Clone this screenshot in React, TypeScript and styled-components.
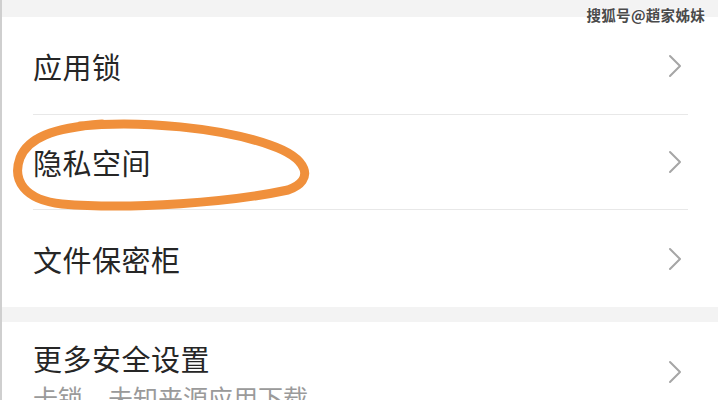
import React from 'react';
import styled, { createGlobalStyle } from 'styled-components';

const GlobalStyle = createGlobalStyle`
  html, body {
    margin: 0;
    padding: 0;
    background: #f3f3f3;
    overflow: hidden;
  }
  body {
    font-family: "Noto Sans CJK SC", "Noto Sans", sans-serif;
  }
`

const Screen = styled.div`
  position: relative;
  width: 718px;
  height: 400px;
  overflow: hidden;
  background: #f3f3f3;
  border-left: 2px solid #cfcfcf;
  box-sizing: border-box;
  padding-top: 17px;
  display: flex;
  flex-direction: column;
  gap: 15px;
`

const Card = styled.div`
  background: #ffffff;
  display: flex;
  flex-direction: column;
`

const Row = styled.div<{ height: number, divider?: boolean }>`
  height: ${props => props.height}px;
  flex-shrink: 0;
  margin: 0 30px 0 31px;
  display: flex;
  align-items: center;
  justify-content: space-between;
  border-bottom: ${props => props.divider ? '1px solid #e8e8e8' : 'none'};
  box-sizing: border-box;
`

const TextBlock = styled.div`
  align-self: flex-start;
  padding-top: 19px;
  display: flex;
  flex-direction: column;
`

const Title = styled.div`
  font-size: 29px;
  line-height: 34px;
  color: #262626;
  letter-spacing: 0.5px;
`

const Subtitle = styled.div`
  font-size: 25px;
  line-height: 30px;
  color: #9a9a9a;
  margin-top: 7px;
  white-space: nowrap;
`

const Chevron = styled.svg`
  width: 14px;
  height: 24px;
  margin-right: 6px;
  flex-shrink: 0;
`

const Watermark = styled.div`
  position: absolute;
  top: 4px;
  right: 13px;
  font-size: 14.5px;
  font-weight: 700;
  color: #4a4a4a;
  letter-spacing: 0.3px;
  text-shadow: 0 0 2px #fff, 0 0 2px #fff;
`

const Marker = styled.svg`
  position: absolute;
  left: 0;
  top: 0;
  pointer-events: none;
`

function Arrow() {
  return (
    <Chevron viewBox="0 0 14 24">
      <path d="M2 2 L12 12 L2 22" fill="none" stroke="#a6a6a6" strokeWidth="2" strokeLinecap="round" strokeLinejoin="round" />
    </Chevron>
  )
}

export default function App() {
  return (
    <>
      <GlobalStyle />
      <Screen>
        <Card>
          <Row height={98} divider>
            <Title>应用锁</Title>
            <Arrow />
          </Row>
          <Row height={95} divider>
            <Title>隐私空间</Title>
            <Arrow />
          </Row>
          <Row height={97}>
            <Title>文件保密柜</Title>
            <Arrow />
          </Row>
        </Card>
        <Card>
          <Row height={100}>
            <TextBlock>
              <Title>更多安全设置</Title>
              <Subtitle>卡锁、未知来源应用下载</Subtitle>
            </TextBlock>
            <Arrow />
          </Row>
        </Card>
        <Watermark>搜狐号@趙家姊妹</Watermark>
        <Marker width="718" height="400" viewBox="0 0 718 400">
          <path
            d="M78 126 C 140 120, 220 128, 268 145 C 306 158, 314 180, 286 190 C 230 202, 130 210, 60 204 C 22 200, 10 180, 18 158 C 26 138, 50 128, 100 124"
            fill="none"
            stroke="#f0903c"
            strokeWidth="9"
            strokeLinecap="round"
            strokeLinejoin="round"
          />
        </Marker>
      </Screen>
    </>
  )
}
